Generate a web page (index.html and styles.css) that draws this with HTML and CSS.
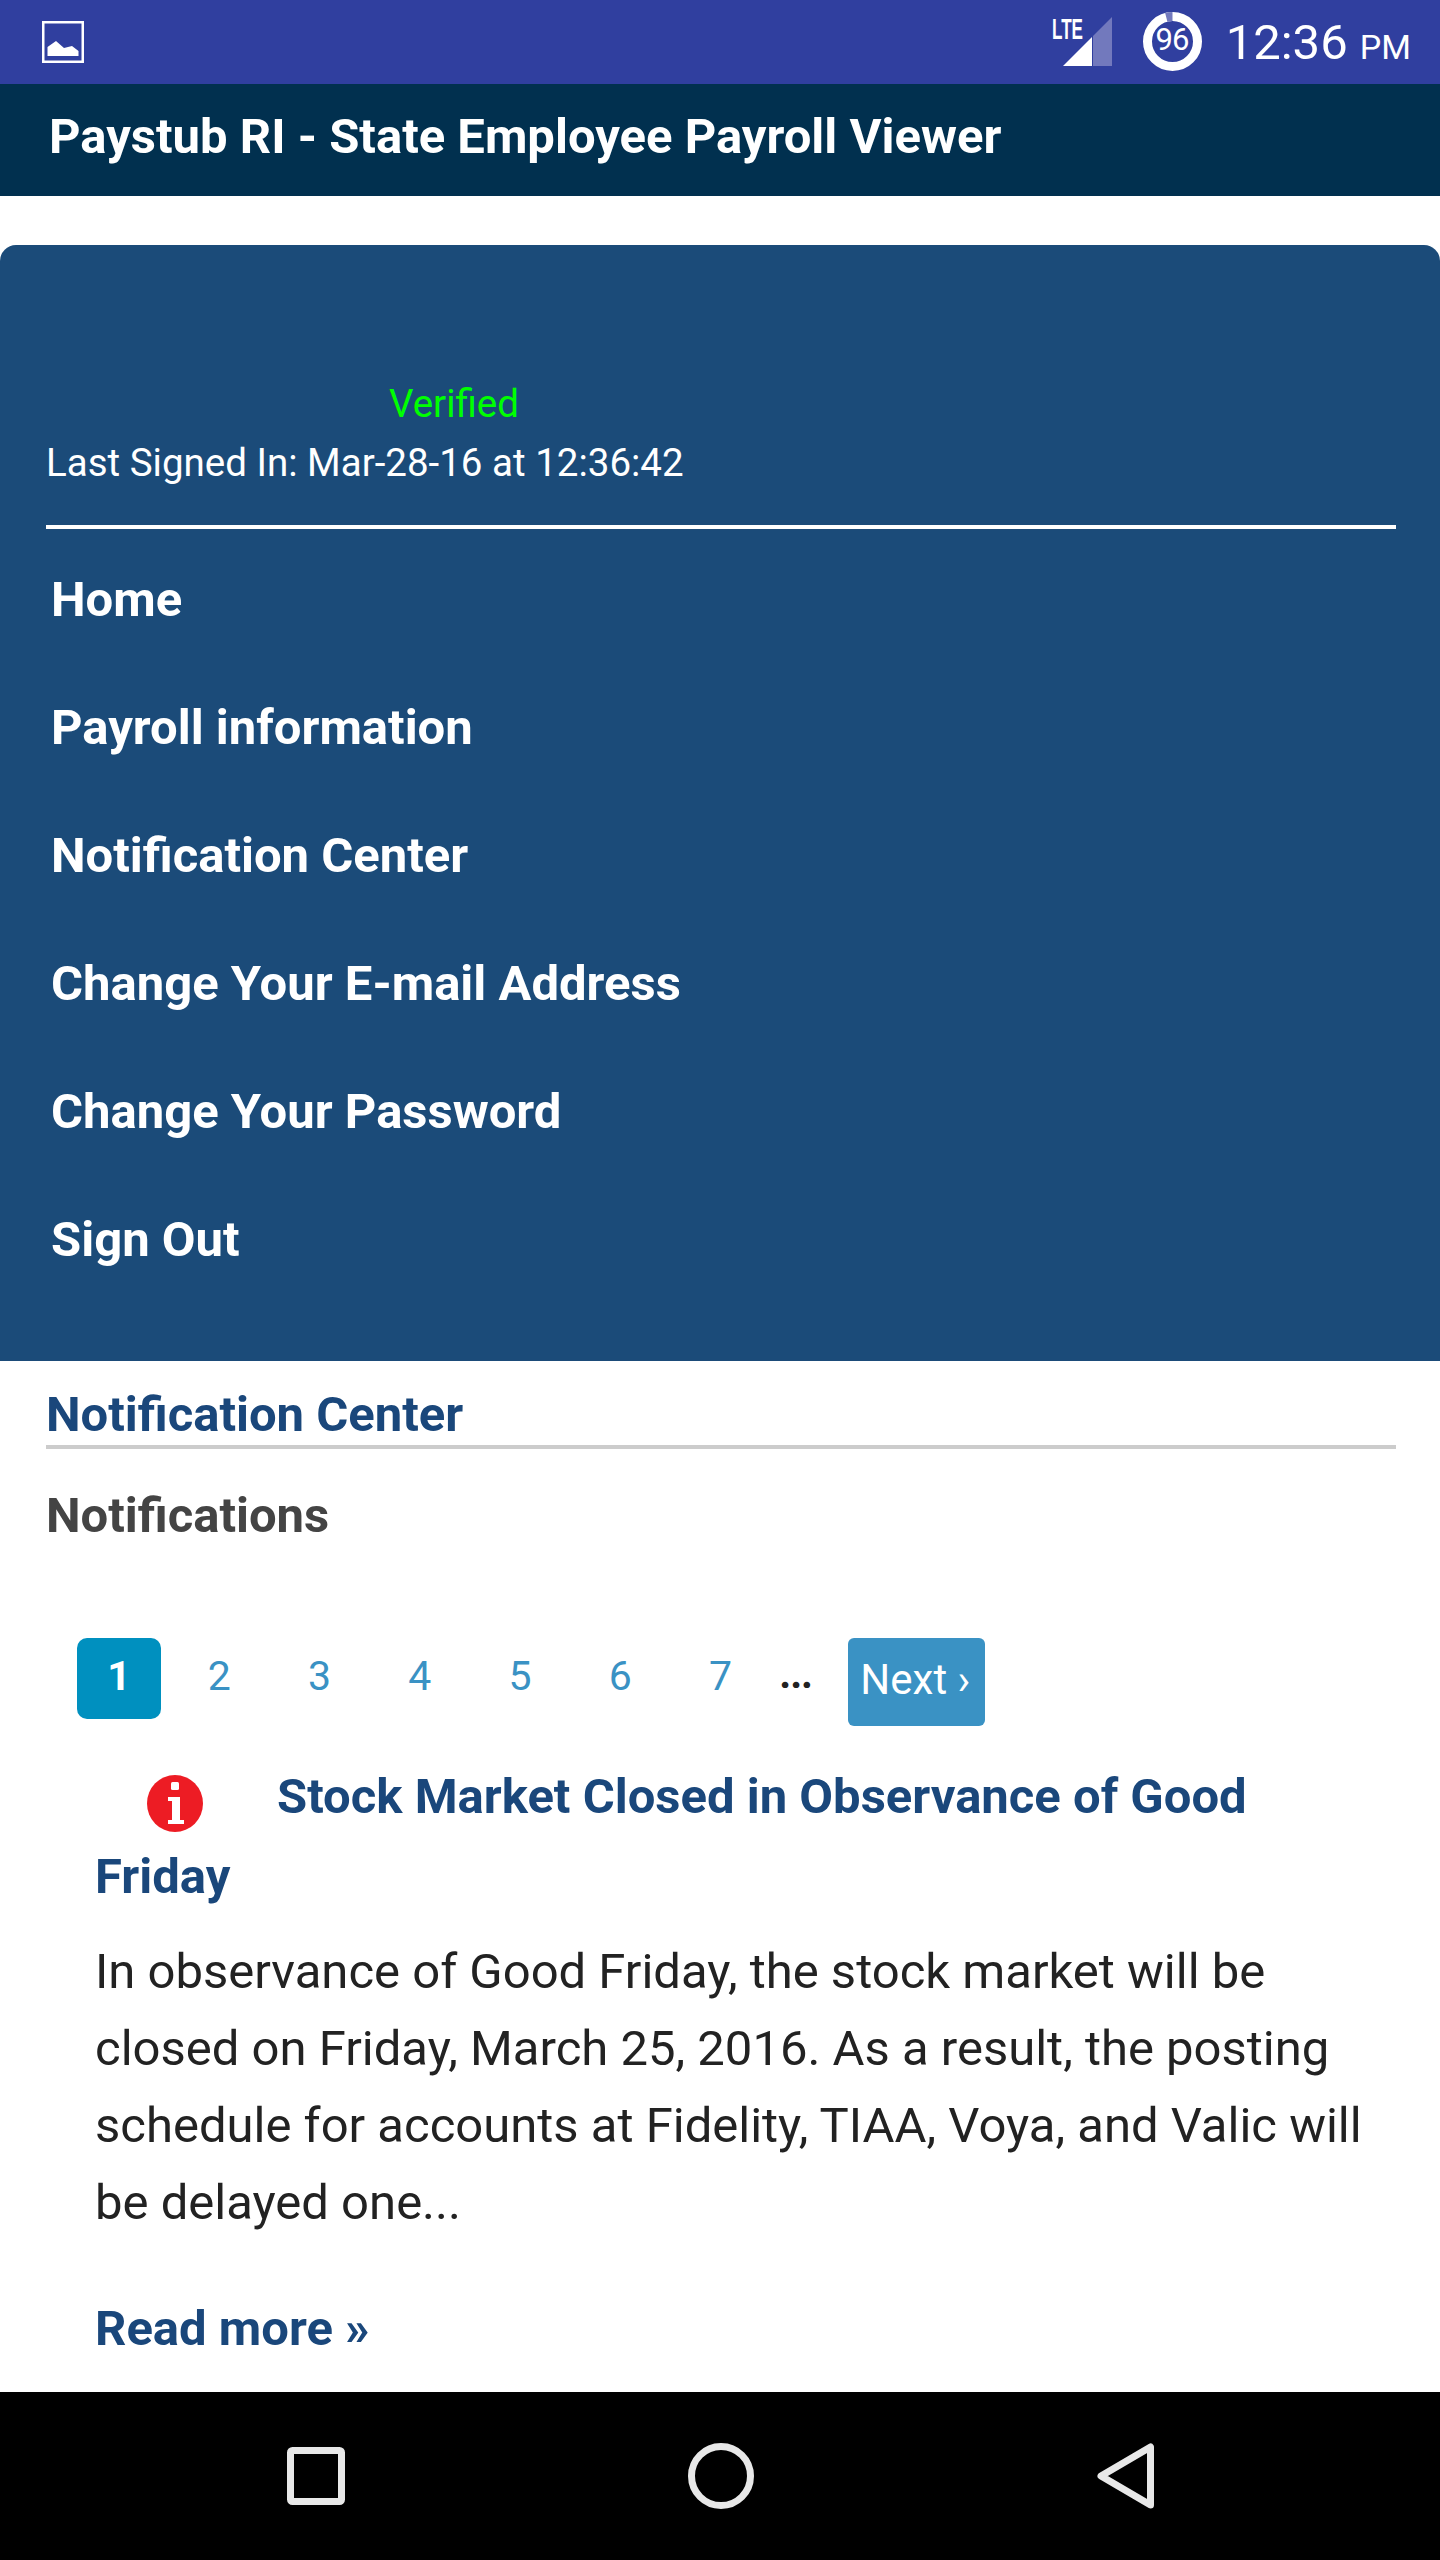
FILE: index.html
```html
<!DOCTYPE html>
<html lang="en">
<head>
    <meta charset="UTF-8">
    <meta name="viewport" content="width=device-width, initial-scale=1.0">
    <title>Paystub RI</title>
    <link rel="stylesheet" href="styles.css">
</head>
<body>
    <div class="status-bar">
        <svg class="picture-icon" width="42" height="42" viewBox="0 0 42 42">
            <rect x="1.250" y="1.250" width="39.500" height="39.500" fill="none" stroke="#fff" stroke-width="2.500"/>
            <path d="M5.500 35V26L14 20l8 7 8-2 6.500 5V35z" fill="#fff"/>
        </svg>
        <div class="status-right">
            <svg class="signal-icon" width="62" height="62" viewBox="0 -6 62 62">
                <path d="M61 0V49H42V19z" fill="#7279bd"/>
                <path d="M41 20V49H12z" fill="#fff"/>
                <text x="1" y="22" class="lte-text" textLength="31" lengthAdjust="spacingAndGlyphs">LTE</text>
            </svg>
            <svg class="battery-icon" width="59" height="59" viewBox="0 0 59 59">
                <circle cx="29.500" cy="29.500" r="25" fill="none" stroke="#fff" stroke-width="9"/>
                <path d="M23.280 5.290A25 25 0 0 1 29.500 4.500" fill="none" stroke="#7279bd" stroke-width="9"/>
                <text x="29" y="38" class="battery-text">96</text>
            </svg>
            <div class="clock">12:36 <span class="ampm">PM</span></div>
        </div>
    </div>

    <div class="app-header">Paystub RI - State Employee Payroll Viewer</div>

    <div class="side-panel">
        <div class="verified">Verified</div>
        <div class="last-signed">Last Signed In: Mar-28-16 at 12:36:42</div>
        <div class="panel-line"></div>
        <ul class="menu">
            <li>Home</li>
            <li>Payroll information</li>
            <li>Notification Center</li>
            <li>Change Your E-mail Address</li>
            <li>Change Your Password</li>
            <li>Sign Out</li>
        </ul>
    </div>

    <div class="content">
        <h2 class="page-title">Notification Center</h2>
        <h3 class="section-title">Notifications</h3>

        <div class="pager">
            <span class="page-num current">1</span>
            <span class="page-num">2</span>
            <span class="page-num">3</span>
            <span class="page-num">4</span>
            <span class="page-num">5</span>
            <span class="page-num">6</span>
            <span class="page-num">7</span>
            <span class="dots">...</span>
            <span class="next">Next ›</span>
        </div>

        <div class="notice">
            <h4 class="notice-title">
                <svg class="info-icon" width="56" height="57" viewBox="0 0 56 57">
                    <ellipse cx="28" cy="28.500" rx="28" ry="28.500" fill="#ed1c24"/>
                    <rect x="24" y="7" width="8" height="8" rx="1.500" fill="#fff"/>
                    <path d="M21 22h12v23h4v4H21v-4h4V26h-4z" fill="#fff"/>
                </svg>Stock Market Closed in Observance of Good Friday
            </h4>
            <p class="notice-body">In observance of Good Friday, the stock market will be closed on Friday, March 25, 2016. As a result, the posting schedule for accounts at Fidelity, TIAA, Voya, and Valic will be delayed one...</p>
            <div class="read-more">Read more »</div>
        </div>
    </div>

    <div class="nav-bar">
        <svg width="58" height="58" viewBox="0 0 58 58">
            <rect x="3.500" y="3.500" width="51" height="51" rx="2" fill="none" stroke="#e8e8e8" stroke-width="7"/>
        </svg>
        <svg width="66" height="66" viewBox="0 0 66 66">
            <circle cx="33" cy="33" r="29.500" fill="none" stroke="#e8e8e8" stroke-width="7"/>
        </svg>
        <svg width="57" height="66" viewBox="0 0 57 66">
            <path d="M53.500 4V62L4 33z" fill="none" stroke="#e8e8e8" stroke-width="7" stroke-linejoin="round"/>
        </svg>
    </div>
</body>
</html>
```

FILE: styles.css
```css
* {
    box-sizing: border-box;
}

body {
    margin: 0;
    padding: 0;
    height: 2560px;
    overflow: hidden;
    background-color: #fff;
    font-family: Roboto, "Liberation Sans", sans-serif;
    display: flex;
    flex-direction: column;
}

.status-bar {
    height: 84px;
    flex: none;
    background-color: #303f9f;
    display: flex;
    align-items: center;
    justify-content: space-between;
    padding: 0 29px 0 42px;
}

.status-right {
    display: flex;
    align-items: center;
}

.signal-icon {
    margin-right: 30px;
    margin-top: -1px;
}

.lte-text {
    font-family: "Liberation Sans", sans-serif;
    font-size: 29px;
    font-weight: bold;
    fill: #fff;
}

.battery-icon {
    margin-right: 24px;
    margin-top: -1px;
}

.battery-text {
    font-size: 31px;
    font-weight: 400;
    fill: #fff;
    text-anchor: middle;
    letter-spacing: -1px;
}

.clock {
    color: #fff;
    font-size: 49px;
    line-height: 84px;
    margin-top: 6px;
}

.ampm {
    font-size: 34px;
}

.app-header {
    height: 112px;
    flex: none;
    background-color: #01304f;
    color: #fff;
    font-size: 49px;
    font-weight: 700;
    line-height: 106px;
    padding-left: 49px;
}

.side-panel {
    margin-top: 49px;
    height: 1116px;
    flex: none;
    background-color: #1b4b79;
    border-radius: 16px 16px 0 0;
    padding: 135px 44px 0 46px;
    color: #fff;
}

.verified {
    color: #00ff00;
    font-size: 38.500px;
    line-height: 48px;
    padding-left: 343px;
}

.last-signed {
    font-size: 38.500px;
    line-height: 48px;
    margin-top: 11px;
}

.panel-line {
    height: 4px;
    background-color: #fff;
    margin-top: 38px;
}

.menu {
    list-style: none;
    margin: 0;
    padding: 7px 0 0 5px;
}

.menu li {
    font-size: 49px;
    font-weight: 700;
    line-height: 128px;
}

.content {
    padding: 0 44px 0 46px;
}

.page-title {
    margin: 24px 0 0;
    font-size: 49px;
    font-weight: 700;
    line-height: 60px;
    color: #1a477b;
    border-bottom: 4px solid #ccc;
}

.section-title {
    margin: 37px 0 0;
    font-size: 49px;
    font-weight: 700;
    line-height: 60px;
    color: #444;
}

.pager {
    display: flex;
    align-items: flex-start;
    margin-top: 92px;
    padding-left: 31px;
}

.page-num {
    width: 100.300px;
    height: 81px;
    font-size: 41px;
    line-height: 76px;
    text-align: center;
    color: #3a92c4;
}

.page-num.current {
    width: 84px;
    margin-right: 8px;
    background-color: #0090bf;
    border-radius: 10px;
    color: #fff;
    font-weight: 700;
}

.dots {
    width: 27px;
    margin-left: 9px;
    font-size: 36px;
    font-weight: 900;
    line-height: 76px;
    color: #222;
}

.next {
    width: 137px;
    height: 88px;
    margin-left: 41px;
    padding-right: 2px;
    background-color: #3a92c4;
    border-radius: 6px;
    color: #fff;
    font-size: 42px;
    line-height: 84px;
    text-align: center;
}

.notice {
    padding: 0 30px 0 49px;
}

.notice-title {
    margin: 31px 0 0;
    font-size: 49px;
    font-weight: 700;
    line-height: 80px;
    color: #1a477b;
}

.info-icon {
    margin: 0 74px 0 52px;
    vertical-align: -18.500px;
}

.notice-body {
    margin: 16px 0 0;
    font-size: 49px;
    line-height: 77px;
    color: #222;
}

.read-more {
    margin-top: 58px;
    font-size: 49px;
    font-weight: 700;
    line-height: 60px;
    color: #1a477b;
}

.nav-bar {
    margin-top: auto;
    height: 168px;
    flex: none;
    background-color: #000;
    display: flex;
    align-items: center;
    justify-content: space-between;
    padding: 0 286px 0 287px;
}
```
